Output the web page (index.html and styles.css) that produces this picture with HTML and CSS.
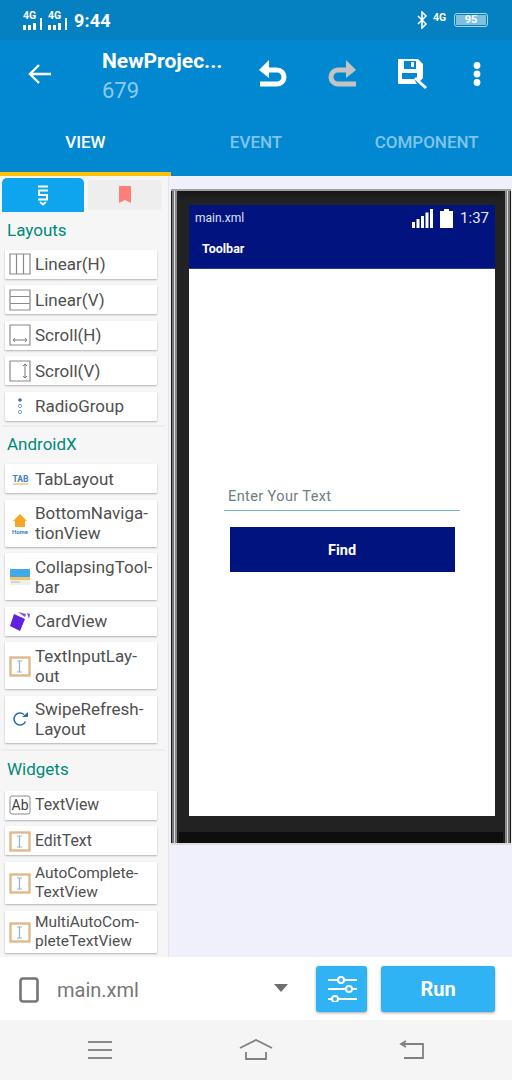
FILE: index.html
```html
<!DOCTYPE html>
<html lang="en">
<head>
<meta charset="utf-8">
<title>Sketchware View</title>
<link rel="stylesheet" href="styles.css">
</head>
<body>
<div class="app">
  <header class="status">
    <div class="status-left">
      <span class="sig"><i class="sig-t">4G</i><svg width="20" height="12" viewBox="0 0 20 12"><path d="M0 7h3v5H0zM5 7h3v5H5zM10 5h3v7h-3zM17 0h2v12h-2z" fill="#fff"/></svg></span>
      <span class="sig"><i class="sig-t">4G</i><svg width="20" height="12" viewBox="0 0 20 12"><path d="M0 7h3v5H0zM5 7h3v5H5zM10 5h3v7h-3zM17 0h2v12h-2z" fill="#fff"/></svg></span>
      <span class="clock">9:44</span>
    </div>
    <div class="status-right">
      <svg width="11" height="18" viewBox="0 0 11 18"><path d="M1 5l8 8-4 4V1l4 4-8 8" fill="none" stroke="#fff" stroke-width="1.600"/></svg>
      <span class="net">4G</span>
      <span class="batt"><span class="batt-fill">95</span></span>
    </div>
  </header>
  <div class="appbar">
    <svg class="back" width="26" height="24" viewBox="0 0 26 24"><path d="M24 12H3M12 3l-9 9 9 9" fill="none" stroke="#fff" stroke-width="2.400"/></svg>
    <div class="title">
      <div class="title-main">NewProjec...</div>
      <div class="title-sub">679</div>
    </div>
    <div class="actions">
      <svg width="30" height="30" viewBox="0 0 30 30"><path d="M2 25h17a6.500 6.500 0 0 0 0-14H4" fill="none" stroke="#fff" stroke-width="5"/><path d="M11 1L1 11l10 8z" fill="#fff"/></svg>
      <svg width="30" height="30" viewBox="0 0 30 30"><path d="M29 25H11a6.500 6.500 0 0 1 0-14h15" fill="none" stroke="#c4c4c4" stroke-width="5"/><path d="M19 1l10 10-10 8z" fill="#c4c4c4"/></svg>
      <svg width="32" height="32" viewBox="0 0 32 32"><path d="M2 1h20l5 5v14l-3 3-4-2H2z" fill="#fff"/><path d="M8 3h12v8H8z" fill="#0288d1"/><path d="M15 4h3v5h-3z" fill="#fff"/><path d="M6 15h15v7H6zM2 21h16v5H2z" fill="#0288d1"/><path d="M2 21h16l3 5H3a1 1 0 0 1-1-1z" fill="#fff"/><path d="M19 20l11 10" stroke="#fff" stroke-width="3"/></svg>
      <svg class="dots" width="10" height="26" viewBox="0 0 10 26"><circle cx="5" cy="4.500" r="3.400" fill="#fff"/><circle cx="5" cy="13" r="3.400" fill="#fff"/><circle cx="5" cy="21.500" r="3.400" fill="#fff"/></svg>
    </div>
  </div>
  <nav class="tabs">
    <div class="tab tab-on">VIEW</div>
    <div class="tab">EVENT</div>
    <div class="tab">COMPONENT</div>
  </nav>
  <main class="body">
    <aside class="side">
      <div class="side-tabs">
        <div class="stab stab-on"><svg width="14" height="21" viewBox="0 0 14 21"><path d="M2 1.500h10" stroke="#fff" stroke-width="2"/><path d="M12 5.500H3v4.500h8v4.500H2" fill="none" stroke="#fff" stroke-width="2"/><path d="M4 17l3 2.500 3-2.500" fill="none" stroke="#fff" stroke-width="1.800"/></svg></div>
        <div class="stab"><svg width="12" height="18" viewBox="0 0 12 18"><path d="M0 0h12v17l-6-3-6 3z" fill="#ff7f78"/></svg></div>
      </div>
      <h2 class="sec">Layouts</h2>
      <div class="item"><svg class="ic" width="22" height="22" viewBox="0 0 22 22"><path d="M1 1h20v20H1zM7.500 1v20M14.500 1v20" fill="none" stroke="#8a8a8a" stroke-width="1.200"/></svg><span>Linear(H)</span></div>
      <div class="item"><svg class="ic" width="22" height="22" viewBox="0 0 22 22"><path d="M1 1h20v20H1zM1 7.500h20M1 14.500h20" fill="none" stroke="#8a8a8a" stroke-width="1.200"/></svg><span>Linear(V)</span></div>
      <div class="item"><svg class="ic" width="22" height="22" viewBox="0 0 22 22"><path d="M1 1h20v20H1z" fill="none" stroke="#8a8a8a" stroke-width="1.200"/><path d="M4 16h14M6 14l-2 2 2 2M16 14l2 2-2 2" fill="none" stroke="#777" stroke-width="1"/></svg><span>Scroll(H)</span></div>
      <div class="item"><svg class="ic" width="22" height="22" viewBox="0 0 22 22"><path d="M1 1h20v20H1z" fill="none" stroke="#8a8a8a" stroke-width="1.200"/><path d="M16 4v14M14 6l2-2 2 2M14 16l2 2 2-2" fill="none" stroke="#777" stroke-width="1"/></svg><span>Scroll(V)</span></div>
      <div class="item"><svg class="ic" width="22" height="22" viewBox="0 0 22 22"><circle cx="11" cy="5" r="1.800" fill="#3f6f9f"/><circle cx="11" cy="11" r="1.600" fill="none" stroke="#4f86b8" stroke-width=".8"/><circle cx="11" cy="17" r="1.600" fill="none" stroke="#4f86b8" stroke-width=".8"/></svg><span>RadioGroup</span></div>
      <hr class="rule">
      <h2 class="sec">AndroidX</h2>
      <div class="item"><svg class="ic" width="22" height="22" viewBox="0 0 22 22"><path d="M4 16h15" stroke="#f0b860" stroke-width="1.200"/><text x="11.500" y="14" class="ic-tab">TAB</text></svg><span>TabLayout</span></div>
      <div class="item item-2"><svg class="ic" width="22" height="24" viewBox="0 0 22 24"><path d="M11 3l7 7h-2v6H6v-6H4z" fill="#f5a623"/><text x="11" y="23" class="ic-home">Home</text></svg><span>BottomNaviga-<br>tionView</span></div>
      <div class="item item-2"><svg class="ic" width="22" height="22" viewBox="0 0 22 22"><path d="M1 3h20v11H1z" fill="#3fa9ea"/><path d="M1 11h20v3H1z" fill="#f5c469"/><path d="M1 14h20v5H1z" fill="#eef0ea"/><path d="M2 16h9" stroke="#bbb"/></svg><span>CollapsingTool-<br>bar</span></div>
      <div class="item"><svg class="ic" width="22" height="22" viewBox="0 0 22 22"><path d="M9 2l8 2-1 3" fill="#7c4de8"/><path d="M18 3l3 1-1 5z" fill="#7c4de8"/><path d="M5 4l11 5-5 12L1 16z" fill="#5e22e0"/></svg><span>CardView</span></div>
      <div class="item item-2"><svg class="ic" width="22" height="22" viewBox="0 0 22 22"><use href="#edit"/></svg><span>TextInputLay-<br>out</span></div>
      <div class="item item-2"><svg class="ic" width="22" height="22" viewBox="0 0 22 22"><path d="M16.500 13.500A6 6 0 1 1 15 6.500" fill="none" stroke="#2a6db0" stroke-width="1.500"/><path d="M13 9h6V4z" fill="#2a6db0"/></svg><span>SwipeRefresh-<br>Layout</span></div>
      <hr class="rule rule-w">
      <h2 class="sec sec-w">Widgets</h2>
      <div class="item item-s"><svg class="ic" width="22" height="22" viewBox="0 0 22 22"><rect x="1" y="2" width="20" height="18" rx="2" fill="#fff" stroke="#8a8a8a"/><text x="11" y="16" class="ic-ab">Ab</text></svg><span>TextView</span></div>
      <div class="item item-s"><svg class="ic" width="22" height="22" viewBox="0 0 22 22"><use href="#edit"/></svg><span>EditText</span></div>
      <div class="item item-c"><svg class="ic" width="22" height="22" viewBox="0 0 22 22"><use href="#edit"/></svg><span>AutoComplete-<br>TextView</span></div>
      <div class="item item-c"><svg class="ic" width="22" height="22" viewBox="0 0 22 22"><use href="#edit"/></svg><span>MultiAutoCom-<br>pleteTextView</span></div>
    </aside>
    <section class="canvas">
      <div class="phone">
        <div class="screen">
          <div class="p-status">
            <span class="p-name">main.xml</span>
            <span class="p-right">
              <svg width="21" height="19" viewBox="0 0 21 19"><path d="M0 13h3v6H0zM4.500 10h3v9h-3zM9 7h3v12H9zM13.500 3.500h3V19h-3zM18 0h3v19h-3z" fill="#fff"/></svg>
              <svg width="13" height="19" viewBox="0 0 13 19"><path d="M4 0h5v2h4v17H0V2h4z" fill="#fff"/></svg>
              <span class="p-time">1:37</span>
            </span>
          </div>
          <div class="p-toolbar">Toolbar</div>
          <div class="p-body">
            <div class="p-input">Enter Your Text</div>
            <div class="p-btn">Find</div>
          </div>
        </div>
      </div>
    </section>
  </main>
  <div class="bottom">
    <svg class="dev" width="20" height="26" viewBox="0 0 20 26"><rect x="1.500" y="1.500" width="17" height="23" rx="2.500" fill="none" stroke="#757575" stroke-width="2.600"/></svg>
    <span class="file">main.xml</span>
    <svg class="caret" width="14" height="8" viewBox="0 0 14 8"><path d="M0 0h14L7 8z" fill="#6e6e6e"/></svg>
    <div class="btn-set"><svg width="30" height="26" viewBox="0 0 30 26"><g fill="none" stroke="#fff" stroke-width="2"><path d="M1 4h29M1 13h29M1 23h29"/><circle cx="14" cy="4" r="3" fill="#2fb3f5"/><circle cx="22" cy="13" r="3" fill="#2fb3f5"/><circle cx="8" cy="23" r="3" fill="#2fb3f5"/></g></svg></div>
    <div class="btn-run">Run</div>
  </div>
  <footer class="nav">
    <svg width="26" height="20" viewBox="0 0 26 20"><path d="M1 2h24M1 10h24M1 18h24" stroke="#8a8a8a" stroke-width="2"/></svg>
    <svg width="34" height="22" viewBox="0 0 34 22"><path d="M1 9L17 1l16 8M7 13v7h20v-7" fill="none" stroke="#808080" stroke-width="1.800"/></svg>
    <svg width="26" height="20" viewBox="0 0 26 20"><path d="M3 4h21v14H5M7 1L2 4l5 3" fill="none" stroke="#808080" stroke-width="1.800"/></svg>
  </footer>
</div>
<svg class="defs" width="0" height="0"><defs><g id="edit"><rect x="1.500" y="2.500" width="19" height="18" fill="#fff" stroke="#dfb98a" stroke-width="2.400"/><path d="M8 6h5M8 17h5M10.500 6v11" fill="none" stroke="#8fb4cf" stroke-width="1.200"/></g></defs></svg>
</body>
</html>
```

FILE: styles.css
```css
* { box-sizing: border-box; }
html, body { margin: 0; padding: 0; }
body { font-family: Roboto, "Liberation Sans", sans-serif; background: #fff; }
.defs { position: absolute; }
.app { width: 512px; height: 1080px; display: flex; flex-direction: column; overflow: hidden; }

.status { height: 40px; background: #0581c2; color: #fff; display: flex; justify-content: space-between; align-items: center; padding: 0 24px 0 23px; }
.status-left { display: flex; align-items: center; gap: 5px; }
.sig { display: flex; flex-direction: column; width: 20px; height: 19px; }
.sig svg { margin-top: -3px; }
.sig-t { font: normal 700 10.500px/10px Roboto, sans-serif; color: #fff; }
.clock { font-size: 18px; font-weight: 700; margin-left: 1px; letter-spacing: .2px; }
.status-right { display: flex; align-items: center; gap: 5px; }
.net { font-size: 10.500px; font-weight: 700; width: 16px; margin-top: -6px; }
.batt { width: 34px; height: 14px; border: 1px solid #a5d6ee; border-radius: 3px; padding: 1px; display: flex; }
.batt-fill { flex: 1; background: #7ebfe0; font-size: 11px; font-weight: 700; line-height: 10px; text-align: center; color: #fff; }

.appbar { height: 65px; background: #0288d1; color: #fff; display: flex; align-items: center; padding: 0 29px 0 27px; }
.back { flex: none; margin-top: 2px; }
.title { width: 150px; flex: none; margin-left: 49px; margin-top: 8px; }
.title-main { font-size: 21px; font-weight: 700; line-height: 28px; white-space: nowrap; }
.title-sub { font-size: 22px; line-height: 31px; color: #8ccbee; }
.actions { flex: 1; display: flex; gap: 39px; align-items: center; margin-top: 3px; margin-left: 6px; }
.dots { margin-left: 5px; }

.tabs { height: 71px; background: #0288d1; display: flex; }
.tab { flex: 1; display: flex; align-items: center; justify-content: center; padding-top: 6px; font-size: 17px; font-weight: 500; color: #80c4ea; height: 67px; }
.tab-on { color: #fff; position: relative; }
.tab-on::after { content: ""; position: absolute; left: 0; right: 0; top: 67px; height: 4px; background: #ffc107; }

.body { flex: 1; display: flex; min-height: 0; background: #f0f0fc; }
.side { width: 169px; background: #f6f6f6; border-right: 1px solid #e6e6e6; padding: 2px 0 0 5px; overflow: hidden; }
.side-tabs { display: flex; gap: 4px; margin-left: -3px; height: 34px; }
.stab { width: 74px; height: 30px; margin-top: 2px; background: #eeeeee; display: flex; align-items: center; justify-content: center; border-radius: 3px; }
.stab-on { width: 82px; height: 34px; margin-top: 0; background: #0ea5ee; border-radius: 5px 5px 0 0; }
.sec { margin: 7.500px 0 9px 2px; font-size: 17px; font-weight: 400; line-height: 21px; color: #00897b; }
.sec-w { margin-bottom: 11px; }
.item { width: 152px; min-height: 29px; background: #fff; box-shadow: 0 1px 2px rgba(0,0,0,.28); border-radius: 1px; margin-bottom: 6.500px; display: flex; align-items: center; gap: 4px; padding: 0 0 0 4px; font-size: 17px; line-height: 20px; color: #4f4f4f; }
.item-2 { height: 47px; }
.item-s { font-size: 15.800px; }
.item-c { height: 42.500px; line-height: 18.500px; font-size: 15.500px; }
.ic { flex: none; }
.ic-tab { font: 700 8.500px Roboto, sans-serif; fill: #3d7fc1; text-anchor: middle; }
.ic-home { font: 700 6px Roboto, sans-serif; fill: #3d7fc1; text-anchor: middle; }
.ic-ab { font: 400 14px Roboto, sans-serif; fill: #444; text-anchor: middle; }
.rule { border: 0; height: 2px; background: #ececec; margin: -2.500px 0 7.500px -3px; width: 163px; }
.rule-w { margin-top: 2px; }

.canvas { flex: 1; padding: 13px 1px 0 2px; }
.phone {
  width: 340px; height: 656px; padding: 14px 16px 27px 18px;
  border-top: 2px solid #a0a0a0; border-bottom: 2px solid #dcdcdc;
  background:
    linear-gradient(90deg, #1a1a1a 0 1px, #777 1px 3px, #ddd 3px 4px, #888 4px 6px, #222 6px) left top / 8px 100% no-repeat,
    linear-gradient(270deg, #1a1a1a 0 1px, #777 1px 3px, #ddd 3px 4px, #888 4px 6px, #222 6px) right top / 8px 100% no-repeat,
    linear-gradient(#0e0e0e, #0e0e0e) left bottom / 100% 11px no-repeat,
    linear-gradient(#161616, #222 10px) left top / 100% 100% no-repeat;
}
.screen { height: 100%; display: flex; flex-direction: column; background: #fff; }
.p-status { height: 26px; background: #00137f; color: #fff; display: flex; justify-content: space-between; align-items: center; padding: 0 6px; }
.p-name { font-size: 12px; color: #dfe3f5; }
.p-right { display: flex; align-items: center; gap: 7px; }
.p-time { font-size: 15px; color: #e6e9f7; }
.p-toolbar { height: 38px; background: #00137f; color: #fff; font-size: 12.500px; font-weight: 700; padding: 10px 0 0 13px; border-bottom: 1px solid #2a3a9a; line-height: 16px; }
.p-body { flex: 1; padding-top: 214px; display: flex; flex-direction: column; align-items: center; }
.p-input { width: 236px; height: 28px; border-bottom: 1.500px solid #75b3c9; font-size: 14.500px; line-height: 28px; color: #6d7d82; padding-left: 4px; letter-spacing: .4px; }
.p-btn { width: 225px; height: 45px; margin-top: 16px; padding-top: 2px; background: #00137f; color: #fff; font-size: 14.500px; font-weight: 700; display: flex; align-items: center; justify-content: center; }

.bottom { height: 63px; background: #fff; display: flex; align-items: center; padding: 0 17px 0 19px; }
.dev { flex: none; margin-top: 2px; }
.file { font-size: 20px; color: #777; margin-left: 18px; width: 218px; flex: none; margin-top: 2px; }
.caret { flex: none; margin-left: -1px; margin-top: -2px; }
.btn-set { width: 51px; height: 46px; margin-left: 28px; background: #2fb3f5; border-radius: 3px; box-shadow: 0 1px 3px rgba(0,0,0,.35); display: flex; align-items: center; justify-content: center; }
.btn-run { width: 114px; height: 46px; margin-left: 14px; background: #2fb3f5; border-radius: 3px; box-shadow: 0 1px 3px rgba(0,0,0,.35); color: #fff; font-size: 20px; font-weight: 700; display: flex; align-items: center; justify-content: center; }

.nav { height: 60px; background: #f5f5f5; display: flex; align-items: center; padding: 0 87px; justify-content: space-between; }
```
